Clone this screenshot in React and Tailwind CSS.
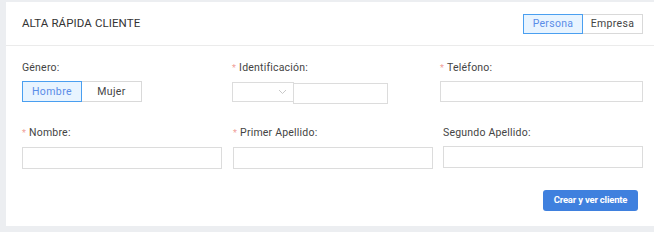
import React, { useState } from 'react'

function Label({ children, required }) {
  return (
    <div className="h-[14px] flex items-center text-[10.5px] leading-[14px] tracking-[0.2px] text-[#444]">
      {required && <span className="text-[#f0a09a] text-[9px] mr-[3px] leading-none">*</span>}
      <span>{children}</span>
    </div>
  )
}

function TextInput({ className }) {
  return (
    <input
      type="text"
      className={`block shrink-0 bg-white border border-[#dcdcdc] outline-none text-[11px] px-2 ${className}`}
    />
  )
}

export default function App() {
  const [tipo, setTipo] = useState('persona')
  const [genero, setGenero] = useState('hombre')

  const seg = (active) =>
    active
      ? 'bg-[#e8f4ff] border border-[#4a9ff0] text-[#5a8de8] z-10'
      : 'bg-white border border-[#d9d9d9] text-[#444]'

  return (
    <div className="w-full h-[232px] bg-[#eceef1] pt-[2px] pl-[6px] font-['Roboto',sans-serif]">
      <div className="bg-white h-[224px] flex flex-col">
        {/* Header */}
        <div className="h-[44px] border-b border-[#ebebeb] flex items-center justify-between pl-4 pr-[11px]">
          <h1 className="text-[11.5px] text-[#333] tracking-[0.1px]">ALTA RÁPIDA CLIENTE</h1>
          <div className="flex">
            <button
              onClick={() => setTipo('persona')}
              className={`w-[60px] h-[20px] text-[10.5px] tracking-[0.3px] ${seg(tipo === 'persona')}`}
            >
              Persona
            </button>
            <button
              onClick={() => setTipo('empresa')}
              className={`w-[61px] h-[20px] -ml-px text-[10.5px] tracking-[0.3px] ${seg(tipo === 'empresa')}`}
            >
              Empresa
            </button>
          </div>
        </div>

        {/* Body */}
        <div className="flex flex-col pl-4 pr-4 pt-[15px]">
          {/* Row 1 */}
          <div className="flex">
            <div className="w-[210px] shrink-0 flex flex-col gap-[6px]">
              <Label>Género:</Label>
              <div className="flex">
                <button
                  onClick={() => setGenero('hombre')}
                  className={`w-[60px] h-[21px] text-[10.5px] tracking-[0.4px] ${seg(genero === 'hombre')}`}
                >
                  Hombre
                </button>
                <button
                  onClick={() => setGenero('mujer')}
                  className={`w-[61px] h-[21px] -ml-px text-[10.5px] tracking-[0.4px] ${seg(genero === 'mujer')}`}
                >
                  Mujer
                </button>
              </div>
            </div>
            <div className="w-[208px] shrink-0 flex flex-col gap-[6px]">
              <Label required>Identificación:</Label>
              <div className="flex items-start pt-px">
                <div className="w-[62px] shrink-0 h-[20px] border border-[#dcdcdc] flex items-center justify-end pr-[6px]">
                  <svg width="9" height="6" viewBox="0 0 9 6" fill="none">
                    <path d="M1 1l3.5 3.5L8 1" stroke="#c8c8c8" strokeWidth="1" />
                  </svg>
                </div>
                <TextInput className="w-[95px] h-[21px] -ml-px mt-px" />
              </div>
            </div>
            <div className="w-[203px] shrink-0 flex flex-col gap-[6px]">
              <Label required>Teléfono:</Label>
              <TextInput className="w-[203px] h-[21px]" />
            </div>
          </div>

          {/* Row 2 */}
          <div className="flex mt-[22px]">
            <div className="w-[210px] shrink-0 flex flex-col gap-[7px]">
              <Label required>Nombre:</Label>
              <TextInput className="w-[200px] h-[22px]" />
            </div>
            <div className="w-[211px] shrink-0 flex flex-col gap-[7px] pl-px">
              <Label required>Primer Apellido:</Label>
              <TextInput className="w-[200px] h-[22px]" />
            </div>
            <div className="w-[200px] shrink-0 flex flex-col gap-[6px]">
              <Label>Segundo Apellido:</Label>
              <TextInput className="w-[200px] h-[22px]" />
            </div>
          </div>

          {/* Footer */}
          <div className="flex justify-end mt-[21px]">
            <button className="w-[95px] h-[21px] rounded-[3px] bg-[#3f80de] text-white text-[9.5px] font-bold tracking-[-0.2px]">
              Crear y ver cliente
            </button>
          </div>
        </div>
      </div>
    </div>
  )
}
